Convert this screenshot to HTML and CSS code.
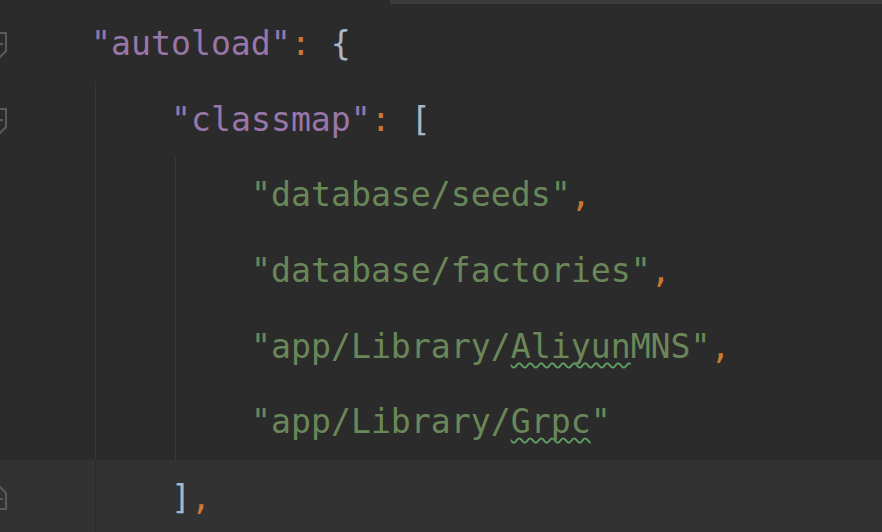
FILE: index.html
```html
<!DOCTYPE html>
<html>
<head>
<meta charset="utf-8">
<link rel="stylesheet" href="styles.css">
</head>
<body>
<div class="editor">
  <div class="topbar"></div>
  <div class="grid">
    <div class="current"></div>
    <div class="guide g-outer"></div>
    <div class="guide g-outer-current"></div>
    <div class="guide g-inner"></div>

    <div class="fold row1">
      <svg width="8" height="27" viewBox="0 -1 8 27"><path d="M-8 0 H6 V18 L0 24 L-8 16 M0 11 H3" fill="none" stroke="#5a5a5a" stroke-width="2"/></svg>
    </div>
    <div class="fold row2">
      <svg width="8" height="27" viewBox="0 -1 8 27"><path d="M-8 0 H6 V18 L0 24 L-8 16 M0 11 H3" fill="none" stroke="#5a5a5a" stroke-width="2"/></svg>
    </div>
    <div class="fold row7">
      <svg width="8" height="27" viewBox="0 -1 8 27"><path d="M-8 22 H6 V6 L0 0 L-8 8 M0 12 H3" fill="none" stroke="#5a5a5a" stroke-width="2"/></svg>
    </div>

    <div class="line row1 ind1"><span class="key">"autoload"</span><span class="punct">:</span> <span class="brace">{</span></div>
    <div class="line row2 ind2"><span class="key">"classmap"</span><span class="punct">:</span> <span class="brace">[</span></div>
    <div class="line row3 ind3"><span class="str">"database/seeds"</span><span class="punct">,</span></div>
    <div class="line row4 ind3"><span class="str">"database/factories"</span><span class="punct">,</span></div>
    <div class="line row5 ind3"><span class="str">"app/Library/<span class="typo">Aliyun</span>MNS"</span><span class="punct">,</span></div>
    <div class="line row6 ind3"><span class="str">"app/Library/<span class="typo">Grpc</span>"</span></div>
    <div class="line row7 ind2"><span class="brace">]</span><span class="punct">,</span></div>
  </div>
</div>
</body>
</html>
```

FILE: styles.css
```css
html, body {
  margin: 0;
  padding: 0;
  background: #2b2b2b;
  overflow: hidden;
}

.editor {
  width: 882px;
  height: 532px;
  overflow: hidden;
  background: #2b2b2b;
}

.topbar {
  height: 4px;
  margin-left: 390px;
  background: #3b3b3b;
}

.grid {
  margin-top: 2px;
  display: grid;
  grid-template-columns: 12px 1fr;
  grid-template-rows: repeat(7, 75.7px);
}

.current {
  grid-row: 7;
  grid-column: 1 / -1;
  background: #323232;
}

.guide {
  grid-column: 2;
  width: 1px;
  justify-self: start;
  background: #373737;
}

.g-outer {
  grid-row: 2 / 7;
  margin-left: 83px;
}

.g-outer-current {
  grid-row: 7;
  margin-left: 83px;
  background: #2c2c2c;
}

.g-inner {
  grid-row: 3 / 7;
  margin-left: 163px;
}

.fold {
  grid-column: 1;
  align-self: start;
  justify-self: start;
  line-height: 0;
  margin-top: 26px;
}

.line {
  grid-column: 2;
  white-space: pre;
  font-family: "DejaVu Sans Mono", "Liberation Mono", monospace;
  font-size: 33.2px;
  line-height: 75.7px;
  color: #a9b7c6;
}

.row1 { grid-row: 1; }
.row2 { grid-row: 2; }
.row3 { grid-row: 3; }
.row4 { grid-row: 4; }
.row5 { grid-row: 5; }
.row6 { grid-row: 6; }
.row7 { grid-row: 7; }

.ind1 { padding-left: 79px; }
.ind2 { padding-left: 159px; }
.ind3 { padding-left: 239px; }

.key { color: #9876aa; }
.str { color: #6a8759; }
.punct { color: #cc7832; }
.brace { color: #a9b7c6; }

.typo {
  text-decoration-line: underline;
  text-decoration-style: wavy;
  text-decoration-color: #5f9e65;
  text-decoration-thickness: 1.7px;
  text-decoration-skip-ink: none;
  text-underline-offset: 4px;
}
```
